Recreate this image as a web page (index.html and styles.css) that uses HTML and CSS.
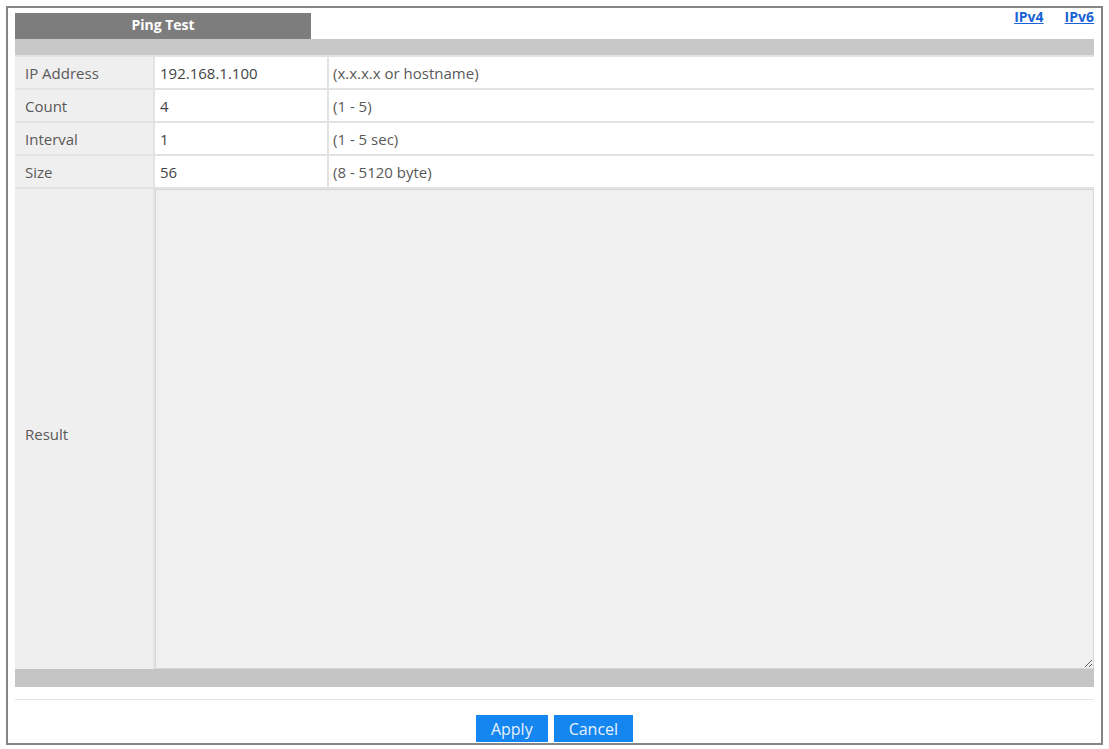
FILE: index.html
```html
<!DOCTYPE html>
<html lang="en">

<head>
    <meta charset="UTF-8">
    <title>Ping Test</title>
    <link rel="stylesheet" href="styles.css">
</head>

<body>

    <div class="frame">
        <div class="header">
            <div class="tab">Ping Test</div>
            <div class="links">
                <a href="#">IPv4</a>
                <a href="#">IPv6</a>
            </div>
        </div>
        <div class="bar"></div>

        <div class="grid">
            <div class="label">IP Address</div>
            <div class="field"><input type="text" value="192.168.1.100"></div>
            <div class="hint">(x.x.x.x or hostname)</div>

            <div class="label">Count</div>
            <div class="field"><input type="text" value="4"></div>
            <div class="hint">(1 - 5)</div>

            <div class="label">Interval</div>
            <div class="field"><input type="text" value="1"></div>
            <div class="hint">(1 - 5 sec)</div>

            <div class="label">Size</div>
            <div class="field"><input type="text" value="56"></div>
            <div class="hint">(8 - 5120 byte)</div>

            <div class="label result-label">Result</div>
            <div class="result"><textarea readonly></textarea></div>
        </div>

        <div class="bar bottom"></div>
        <hr>

        <div class="buttons">
            <button type="button">Apply</button>
            <button type="button">Cancel</button>
        </div>
    </div>

</body>

</html>
```

FILE: styles.css
```css
body {
    margin: 0;
    padding: 0;
    background-color: #fff;
    font-family: 'Open Sans', 'DejaVu Sans', sans-serif;
    color: #595959;
}

.frame {
    margin: 6px 6px 4px 6px;
    border: 2px solid #858585;
    padding: 5px 7px 1px 7px;
}

.header {
    display: flex;
    justify-content: space-between;
    align-items: flex-start;
    height: 26px;
}

.tab {
    width: 296px;
    height: 26px;
    line-height: 24px;
    background-color: #7d7d7d;
    color: #fff;
    font-weight: bold;
    font-size: 14px;
    text-align: center;
}

.links {
    display: flex;
    gap: 21px;
    margin-top: -4px;
}

.links a {
    color: #1b63d4;
    font-weight: bold;
    font-size: 14px;
    line-height: 16px;
}

.bar {
    height: 16px;
    background-color: #c8c8c8;
}

.bar.bottom {
    height: 18px;
    background-color: #c5c5c5;
}

.grid {
    display: grid;
    grid-template-columns: 138px 172px 1fr;
    grid-template-rows: repeat(4, 31px) 480px;
    gap: 2px;
    padding-top: 2px;
    background-color: #e3e3e3;
    font-size: 15px;
}

.label {
    background-color: #efefef;
    padding-left: 10px;
    display: flex;
    align-items: center;
}

.result-label {
    padding-top: 10px;
}

.field {
    background-color: #fff;
}

.field input {
    width: 100%;
    height: 100%;
    box-sizing: border-box;
    border: none;
    outline: none;
    padding: 0 5px;
    font-family: inherit;
    font-size: 15px;
    color: #444;
    background-color: #fff;
}

.hint {
    background-color: #fff;
    padding-left: 4px;
    display: flex;
    align-items: center;
}

.result {
    grid-column: 2 / 4;
    background-color: #e3e3e3;
}

.result textarea {
    display: block;
    width: 100%;
    height: 100%;
    box-sizing: border-box;
    border: 1px solid #d6d6d6;
    background-color: #f0f0f0;
    resize: vertical;
    margin: 0;
}

hr {
    border: none;
    border-top: 1px solid #e4e4e4;
    margin: 12px 0 15px;
}

.buttons {
    display: flex;
    justify-content: center;
    gap: 6px;
}

button {
    height: 27px;
    padding: 0 15px;
    border: none;
    background-color: #1585ef;
    color: #e8f2ff;
    font-family: inherit;
    font-size: 16px;
    cursor: pointer;
}

button:hover {
    background-color: #0a6fd0;
}
```
